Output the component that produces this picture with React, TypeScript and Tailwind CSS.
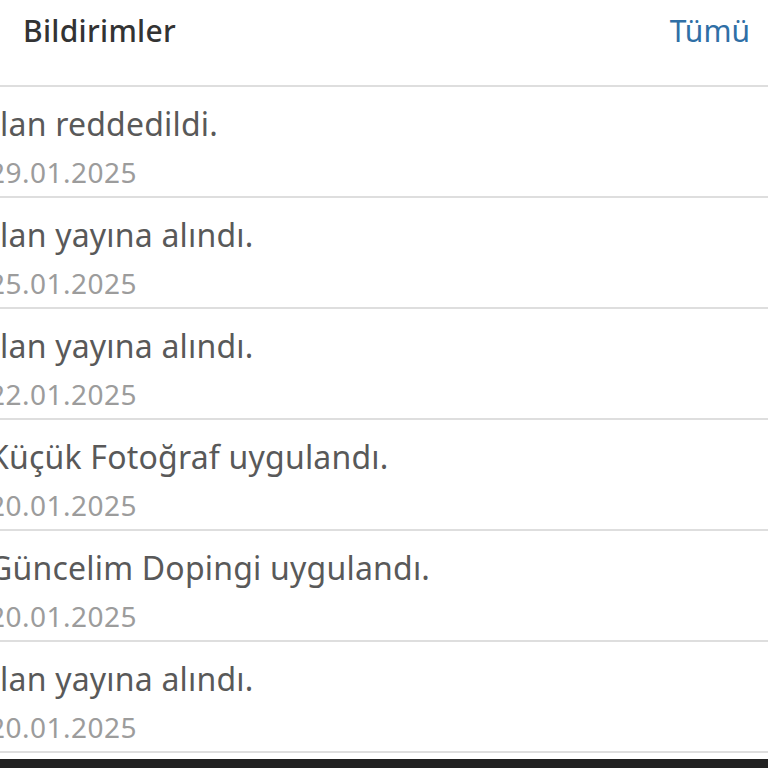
import React from "react";

const rows = [
  { t: "İlan reddedildi.", d: "29.01.2025" },
  { t: "İlan yayına alındı.", d: "25.01.2025" },
  { t: "İlan yayına alındı.", d: "22.01.2025" },
  { t: "Küçük Fotoğraf uygulandı.", d: "20.01.2025" },
  { t: "Güncelim Dopingi uygulandı.", d: "20.01.2025" },
  { t: "İlan yayına alındı.", d: "20.01.2025" },
];

export default function App() {
  return (
    <div className="w-[768px] h-[768px] bg-white overflow-hidden flex flex-col" style={{ fontFamily: '"Noto Sans", "Open Sans", sans-serif' }}>
      <div className="h-[87px] shrink-0 flex items-center justify-between pl-[23px] pr-[18px] border-b-2 border-[#dedede] pb-[24px]">
        <span className="text-[30px] tracking-[0.3px] text-[#333333] font-medium">Bildirimler</span>
        <span className="text-[30px] text-[#2f6fa6]">Tümü</span>
      </div>
      {rows.map((r, i) => (
        <div key={i} className="h-[111px] shrink-0 border-b-2 border-[#dedede] flex flex-col pt-[17px] -ml-[11px]">
          <span className="text-[32px] leading-[40px] tracking-[0.2px] text-[#595959] whitespace-nowrap">{r.t}</span>
          <span className="text-[28px] leading-[34px] tracking-[0.5px] text-[#9c9c9c] mt-[11px] whitespace-nowrap">{r.d}</span>
        </div>
      ))}
      <div className="h-[6px] shrink-0 bg-white" />
      <div className="flex-1 bg-[#222222]" />
    </div>
  );
}
